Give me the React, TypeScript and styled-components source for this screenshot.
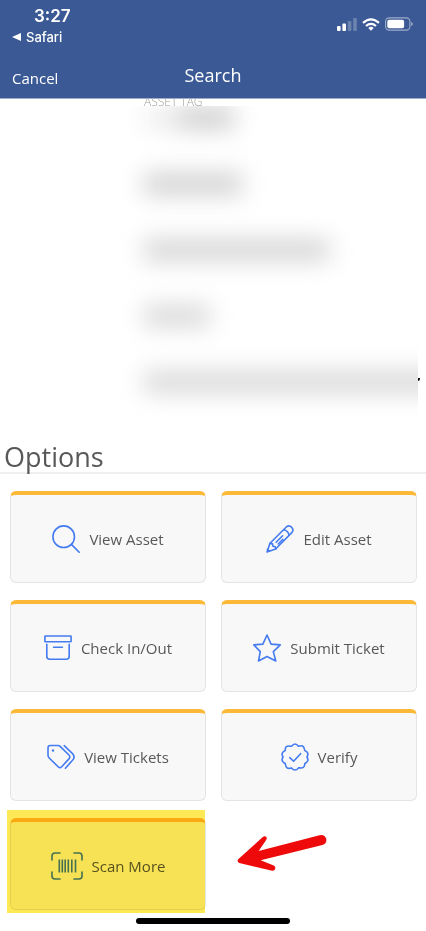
import React from "react";
import styled, { createGlobalStyle } from "styled-components";

const GlobalStyle = createGlobalStyle`
  *, *::before, *::after { box-sizing: border-box; }
  body { margin: 0; background: #fff; font-family: "Open Sans", sans-serif; color: #58585a; }
`;

const Page = styled.div`
  display: flex;
  flex-direction: column;
  min-height: 100vh;
  background: #fff;
`;

const Header = styled.header`
  background: #3b5a95;
  color: #fff;
  border-bottom: 1px solid #9fabc9;
`;

const StatusBar = styled.div`
  display: flex;
  justify-content: space-between;
  padding: 6px 13px 0 12px;
  height: 52px;
  font-family: Inter, sans-serif;
`;

const StatusLeft = styled.div`
  display: flex;
  flex-direction: column;
`;

const Clock = styled.time`
  padding-left: 22px;
  font-size: 17px;
  line-height: 20px;
  font-weight: 600;
`;

const BackLink = styled.a`
  display: flex;
  align-items: center;
  gap: 5px;
  margin-top: 3px;
  color: #fff;
  font-size: 13px;
  line-height: 16px;
  font-weight: 500;
  text-decoration: none;
`;

const StatusIcons = styled.div`
  display: flex;
  align-items: center;
  gap: 5px;
  height: 16px;
  margin-top: 10px;
`;

const NavBar = styled.nav`
  display: grid;
  grid-template-columns: 1fr auto 1fr;
  align-items: center;
  height: 46px;
  padding: 0 12px;
`;

const CancelButton = styled.button`
  justify-self: start;
  padding: 6px 0 0;
  border: 0;
  background: none;
  color: #fff;
  font: 400 15px/22px "Open Sans", sans-serif;
`;

const Title = styled.h1`
  margin: 0;
  font-size: 18px;
  line-height: 26px;
  font-weight: 400;
`;

const FieldLabel = styled.div`
  height: 7px;
  overflow: hidden;
  padding-left: 144px;
  color: #a0a0a0;
  font-size: 12px;
  font-weight: 300;
  line-height: 5px;
`;

const Details = styled.section`
  display: grid;
  grid-template-columns: 1fr 8px;
  height: 336px;
`;

const HiddenValues = styled.div`
  display: flex;
  flex-direction: column;
  gap: 46px;
  overflow: hidden;
  padding: 2px 0 0 144px;
`;

const HiddenValue = styled.div<{ $width: string; $shade: string }>`
  flex: none;
  width: ${(p) => p.$width};
  height: 20px;
  background: ${(p) => p.$shade};
  filter: blur(12px);
`;

const Tick = styled.span`
  width: 2px;
  height: 3px;
  margin-top: 272px;
  border-radius: 0 0 2px 0;
  background: #111;
`;

const SectionTitle = styled.h2`
  margin: 0;
  padding: 0 4px;
  border-bottom: 2px solid #efefef;
  font-size: 27px;
  line-height: 30px;
  font-weight: 400;
`;

const Options = styled.main`
  display: grid;
  grid-template-columns: 1fr 1fr;
  gap: 17px 15px;
  padding: 17px 9px 0 10px;
`;

const Cell = styled.div`
  position: relative;
  display: grid;
`;

const OptionButton = styled.button`
  display: flex;
  align-items: center;
  justify-content: center;
  gap: 9px;
  height: 92px;
  padding: 1px 4px 0;
  border: 1px solid #e4e4e4;
  border-top: 4px solid #fcb938;
  border-radius: 6px;
  background: #f8f8f8;
  color: #58585a;
  font: 400 15px/24px "Open Sans", sans-serif;

  svg {
    flex: none;
    color: #447bf0;
  }
`;

const Highlight = styled.span`
  position: absolute;
  inset: -8px 1px -3px -3px;
  background: #fde956;
  mix-blend-mode: multiply;
  pointer-events: none;
`;

const ArrowCell = styled.div`
  padding: 16px;
`;

const HomeIndicator = styled.div`
  width: 36%;
  height: 6px;
  margin: 8px auto 7px;
  border-radius: 3px;
  background: #000;
`;

type IconProps = { width?: number; height?: number; children: React.ReactNode };

const Icon = ({ width = 28, height = 28, children }: IconProps) => (
  <svg
    width={width}
    height={height}
    viewBox={`0 0 ${width} ${height}`}
    fill="none"
    stroke="currentColor"
    strokeWidth="1.6"
    strokeLinecap="round"
    strokeLinejoin="round"
    aria-hidden="true"
  >
    {children}
  </svg>
);

const SearchIcon = () => (
  <Icon>
    <circle cx="11.7" cy="11.7" r="10.8" />
    <path d="M19.4 19.4 27.2 27.2" />
  </Icon>
);

const PencilIcon = () => (
  <Icon>
    <path d="M1 27 4 18.2 20.3 2q2.6-2.4 5.3.2 2.6 2.8.2 5.4L9.6 24 1 27Z" />
    <path d="M17.6 4.8q4.6.8 5.5 5.5M4 18.4l2.5.5.4 2.3 2.3.5.6 2.2M1.4 24.4l2.1 1.8M10.1 17.2l6.5-6.4M12.2 19l4.6-4.6" />
  </Icon>
);

const BoxIcon = () => (
  <Icon height={26}>
    <rect x=".9" y="1" width="26.2" height="5.8" rx=".6" />
    <path d="M2.8 9.3v12q0 3 3 3h16.4q3 0 3-3v-12M9.6 12.2h8.8" />
  </Icon>
);

const StarIcon = () => (
  <Icon>
    <path d="m14 1 4.1 9.1 9.2.8-7 6.7 2.5 9.4-8.8-4.5-8.5 4.5 1.8-9.4L.8 10.9l9.1-.8L14 1Z" />
  </Icon>
);

const TagsIcon = () => (
  <Icon height={26}>
    <path d="M3.3 1.5h7.5q1.5 0 2.6 1.1l8.3 8.2q2.2 2.2 0 4.3l-7 7.6q-1.8 1.8-3.6 0L2.2 14Q1 12.8 1 11.2V3.8q0-2.3 2.3-2.3Z" />
    <path d="m17.2 1.7 8.3 7.9q3.2 3.3 0 6.7l-7.1 7.9" />
    <circle cx="6" cy="6.5" r="1.2" fill="currentColor" stroke="none" />
  </Icon>
);

const VerifyIcon = () => (
  <Icon>
    <path d="M10.5 3.2q3.5-4.4 7 0 5.1-1.9 6 3.2l.3 1.1q4.8 2.1 2.2 6.5 2.6 4.4-2.2 6.5.1 5.3-5.3 4.3l-1 .1q-3.5 4.3-7 0-5.5 1.7-6-3.2l-.3-1.2Q-.6 18.4 2 14-.6 9.6 4.2 7.5q-.2-5.4 5.2-4.3l1.1 0Z" />
    <path d="m8.8 14.6 3.8 3.7 7-7.6" />
  </Icon>
);

const BarcodeIcon = () => (
  <Icon width={32}>
    <path d="M1 8V4q0-3 3-3h5M23 1h5q3 0 3 3v4M31 20v4q0 3-3 3h-5M9 27H4q-3 0-3-3v-4" />
    <path strokeLinecap="butt" d="M8.3 7.5v13M11.3 7.5v13M14.2 7.5v13M17.3 7.5v13M20.8 7.5v13M24.5 7.5v13" />
  </Icon>
);

const hiddenValues = [
  { width: "90px", shade: "linear-gradient(90deg, #ededed 0 30%, #c8c8c8 45%)" },
  { width: "98px", shade: "#cccccc" },
  { width: "185px", shade: "#d0d0d0" },
  { width: "66px", shade: "#d4d4d4" },
  { width: "110%", shade: "#d4d4d4" },
];

const options = [
  { label: "View Asset", icon: <SearchIcon /> },
  { label: "Edit Asset", icon: <PencilIcon /> },
  { label: "Check In/Out", icon: <BoxIcon /> },
  { label: "Submit Ticket", icon: <StarIcon /> },
  { label: "View Tickets", icon: <TagsIcon /> },
  { label: "Verify", icon: <VerifyIcon /> },
  { label: "Scan More", icon: <BarcodeIcon />, highlighted: true },
];

export default function App() {
  return (
    <Page>
      <GlobalStyle />
      <Header>
        <StatusBar>
          <StatusLeft>
            <Clock>3:27</Clock>
            <BackLink href="#safari">
              <svg width="9" height="8" viewBox="0 0 9 8" aria-hidden="true">
                <path d="M0 4 9 0v8Z" fill="#fff" />
              </svg>
              Safari
            </BackLink>
          </StatusLeft>
          <StatusIcons>
            <svg width="20" height="14" viewBox="0 0 20 14" fill="#fff" aria-label="Signal">
              <rect x="0" y="9" width="3.6" height="5" rx="1" />
              <rect x="5.4" y="6.5" width="3.6" height="7.5" rx="1" />
              <rect x="10.8" y="4" width="3.6" height="10" rx="1" opacity=".25" />
              <rect x="16.2" y="1" width="3.6" height="13" rx="1" opacity=".25" />
            </svg>
            <svg width="18" height="13" viewBox="0 0 18 13" fill="none" stroke="#fff" strokeWidth="2.2" aria-label="Wi-Fi">
              <path d="M1 4.8q8-7 16 0M4 8q5-4.3 10 0" />
              <path d="M9 12.7 6.3 10q2.7-2.3 5.4 0Z" fill="#fff" stroke="none" />
            </svg>
            <svg width="28" height="14" viewBox="0 0 28 14" fill="none" aria-label="Battery">
              <rect x=".6" y=".9" width="24.3" height="12.2" rx="3.6" stroke="#fff" strokeOpacity=".5" strokeWidth="1.1" />
              <rect x="2.3" y="2.7" width="16.8" height="8.6" rx="2" fill="#fff" />
              <path d="M26.2 5q1.6.6 1.6 2t-1.6 2Z" fill="#fff" fillOpacity=".5" />
            </svg>
          </StatusIcons>
        </StatusBar>
        <NavBar>
          <CancelButton type="button">Cancel</CancelButton>
          <Title>Search</Title>
        </NavBar>
      </Header>
      <FieldLabel>ASSET TAG</FieldLabel>
      <Details>
        <HiddenValues>
          {hiddenValues.map((v, i) => (
            <HiddenValue key={i} $width={v.width} $shade={v.shade} />
          ))}
        </HiddenValues>
        <Tick />
      </Details>
      <SectionTitle>Options</SectionTitle>
      <Options>
        {options.map((o) => (
          <Cell key={o.label}>
            <OptionButton type="button">
              {o.icon}
              {o.label}
            </OptionButton>
            {o.highlighted && <Highlight />}
          </Cell>
        ))}
        <ArrowCell>
          <svg width="90" height="38" viewBox="0 0 90 38" fill="#ee0a0a" aria-hidden="true">
            <path d="M1.2 25.3 25.8 3q2-1.4 3.3-.2 1.3 1.3.2 3L21.7 17 82.5 1.2q5.2-1.1 6.7 3.6 1 4.7-3.8 6.2L23.7 26.3 36.7 31.5q2 .9 1.6 3-.7 2.6-3.1 2.3L2.2 29q-2.6-1.5-1-3.7Z" />
          </svg>
        </ArrowCell>
      </Options>
      <HomeIndicator />
    </Page>
  );
}
